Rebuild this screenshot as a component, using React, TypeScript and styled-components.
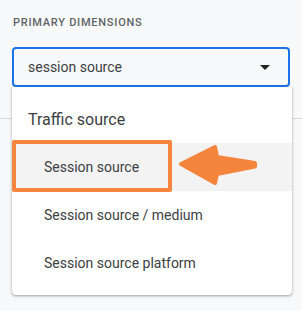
import React from 'react'
import styled, { createGlobalStyle } from 'styled-components'

const GlobalStyle = createGlobalStyle`
body {
    margin: 0;
    background: #f8f9fa;
    font-family: Roboto, "Liberation Sans", sans-serif;
}
`

const Page = styled.div`
position: relative;
width: 302px;
height: 311px;
padding: 16px 12px 0;
box-sizing: border-box;
background: #f8f9fa;
overflow: hidden;
`

const Label = styled.div`
font-size: 11px;
font-weight: 500;
line-height: 14px;
letter-spacing: 0.75px;
color: #5f6368;
padding-left: 1px;
text-transform: uppercase;
`

const Field = styled.div`
position: relative;
margin-top: 17px;
`

const Select = styled.div`
display: flex;
align-items: center;
justify-content: space-between;
height: 40px;
box-sizing: border-box;
padding: 0 18px 0 14px;
border: 2px solid #1a73e8;
border-radius: 4px;
font-size: 14px;
color: #3c4043;
`

const Caret = styled.span`
width: 0;
height: 0;
border-left: 5px solid transparent;
border-right: 5px solid transparent;
border-top: 5px solid #202124;
margin-top: 1px;
`

const Divider = styled.div`
height: 1px;
background: #dadce0;
margin: 31px -12px 0;
`

const Menu = styled.div`
position: absolute;
top: 40px;
left: 0;
width: 280px;
padding: 8px 0;
background: #fff;
border-radius: 0 0 4px 4px;
box-shadow: 0 1px 2px rgba(60, 64, 67, 0.3), 0 1px 3px 1px rgba(60, 64, 67, 0.15);
`

const GroupTitle = styled.div`
height: 48px;
display: flex;
align-items: center;
padding-left: 16px;
font-size: 16px;
color: #3c4043;
`

const Option = styled.div<{ $active?: boolean }>`
height: 48px;
display: flex;
align-items: center;
padding-left: 32px;
font-size: 14px;
color: #3c4043;
background: ${p => (p.$active ? '#f3f3f3' : 'transparent')};
`

const Highlight = styled.div`
position: absolute;
left: 0;
top: 53px;
width: 160px;
height: 52px;
box-sizing: border-box;
border: 4px solid #f5843c;
border-radius: 2px;
`

const Pointer = styled.svg`
position: absolute;
left: 166px;
top: 57px;
`

const options = ['Session source', 'Session source / medium', 'Session source platform']

export default function App() {
    return (
        <>
            <GlobalStyle />
            <Page>
                <Label>Primary dimensions</Label>
                <Field>
                    <Select>
                        session source
                        <Caret />
                    </Select>
                    <Menu>
                        <GroupTitle>Traffic source</GroupTitle>
                        {options.map((o, i) => (
                            <Option key={o} $active={i === 0}>{o}</Option>
                        ))}
                        <Highlight />
                        <Pointer width="80" height="44" viewBox="0 0 80 44">
                            <path
                                d="M3 20 L37 3 L39 13 L77 19 L77 22.5 L39 30 L37 39 Z"
                                fill="#f5843c"
                                stroke="#f5843c"
                                strokeWidth="4"
                                strokeLinejoin="round"
                            />
                        </Pointer>
                    </Menu>
                </Field>
                <Divider />
            </Page>
        </>
    )
}
